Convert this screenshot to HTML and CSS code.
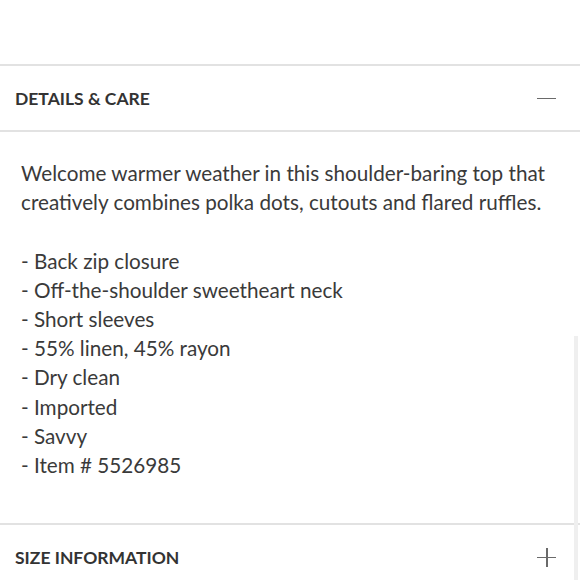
FILE: index.html
```html
<!DOCTYPE html>
<html>
<head>
<meta charset="utf-8">
<link rel="stylesheet" href="styles.css">
</head>
<body>
<div class="page">
  <div class="spacer"></div>
  <section class="acc">
    <div class="acc-head">
      <h2 class="acc-title">DETAILS &amp; CARE</h2>
      <span class="icon minus"></span>
    </div>
    <div class="acc-body">
      <p class="desc">Welcome warmer weather in this shoulder-baring top that creatively combines polka dots, cutouts and flared ruffles.</p>
      <ul class="list">
        <li>- Back zip closure</li>
        <li>- Off-the-shoulder sweetheart neck</li>
        <li>- Short sleeves</li>
        <li>- 55% linen, 45% rayon</li>
        <li>- Dry clean</li>
        <li>- Imported</li>
        <li>- Savvy</li>
        <li>- Item # 5526985</li>
      </ul>
    </div>
  </section>
  <section class="acc">
    <div class="acc-head">
      <h2 class="acc-title">SIZE INFORMATION</h2>
      <span class="icon plus"></span>
    </div>
  </section>
  <div class="scrollbar"></div>
</div>
</body>
</html>
```
FILE: styles.css
```css
html, body {
  margin: 0;
  padding: 0;
  background: #fff;
}
body {
  font-family: Lato, "Open Sans", sans-serif;
  color: #393939;
  overflow: hidden;
}
.page {
  position: relative;
  width: 580px;
  height: 580px;
  overflow: hidden;
}
.spacer {
  height: 64px;
}
.acc {
  border-top: 2px solid #e2e2e2;
}
.acc-head {
  height: 64px;
  display: flex;
  align-items: center;
  justify-content: space-between;
  padding: 0 24px 0 15px;
  border-bottom: 2px solid #e2e2e2;
}
.acc-title {
  margin: 0;
  font-size: 17.5px;
  font-weight: 700;
  letter-spacing: 0;
  color: #333;
}
.icon {
  position: relative;
  width: 19px;
  height: 19px;
}
.icon::before,
.icon::after {
  content: "";
  position: absolute;
  background: #6a6a6a;
}
.icon::before {
  left: 0;
  right: 0;
  top: 9px;
  height: 1.5px;
}
.plus::after {
  top: 0;
  bottom: 0;
  left: 9px;
  width: 1.5px;
}
.acc-body {
  padding: 27px 10px 43px 21px;
  font-size: 20.7px;
  line-height: 29.2px;
  color: #3a3a3a;
}
.desc {
  margin: 0 0 29.2px 0;
}
.list {
  list-style: none;
  margin: 0;
  padding: 0;
}
.scrollbar {
  position: absolute;
  right: 2px;
  top: 336px;
  width: 4px;
  height: 244px;
  background: #efefef;
}
```
